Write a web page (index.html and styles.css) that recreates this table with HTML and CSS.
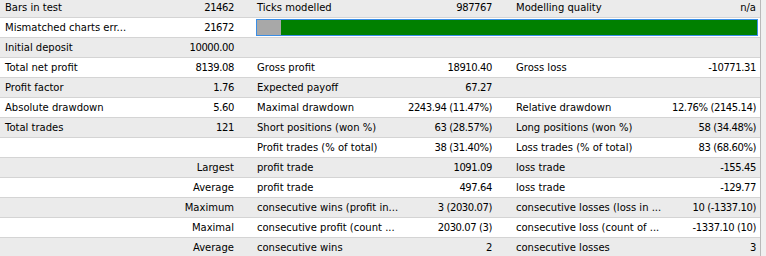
FILE: index.html
```html
<!DOCTYPE html>
<html>
<head>
<meta charset="utf-8">
<link rel="stylesheet" href="styles.css">
</head>
<body>
<div class="report">
  <div class="row odd">
    <div class="lbl first">Bars in test</div><div class="val num">21462</div>
    <div class="lbl mid">Ticks modelled</div><div class="val num">987767</div>
    <div class="lbl last">Modelling quality</div><div class="val end">n/a</div>
  </div>
  <div class="row">
    <div class="lbl first">Mismatched charts err...</div><div class="val num">21672</div>
    <div class="barcell"><div class="bar"><div class="bar-gray"></div><div class="bar-green"></div></div></div>
  </div>
  <div class="row odd">
    <div class="lbl first">Initial deposit</div><div class="val num">10000.00</div>
    <div class="lbl mid"></div><div class="val"></div>
    <div class="lbl last"></div><div class="val end"></div>
  </div>
  <div class="row">
    <div class="lbl first">Total net profit</div><div class="val num">8139.08</div>
    <div class="lbl mid">Gross profit</div><div class="val num">18910.40</div>
    <div class="lbl last">Gross loss</div><div class="val end num">-10771.31</div>
  </div>
  <div class="row odd">
    <div class="lbl first">Profit factor</div><div class="val num">1.76</div>
    <div class="lbl mid">Expected payoff</div><div class="val num">67.27</div>
    <div class="lbl last"></div><div class="val end"></div>
  </div>
  <div class="row">
    <div class="lbl first">Absolute drawdown</div><div class="val num">5.60</div>
    <div class="lbl mid">Maximal drawdown</div><div class="val num">2243.94 (11.47%)</div>
    <div class="lbl last">Relative drawdown</div><div class="val end num">12.76% (2145.14)</div>
  </div>
  <div class="row odd">
    <div class="lbl first">Total trades</div><div class="val num">121</div>
    <div class="lbl mid">Short positions (won %)</div><div class="val num">63 (28.57%)</div>
    <div class="lbl last">Long positions (won %)</div><div class="val end num">58 (34.48%)</div>
  </div>
  <div class="row">
    <div class="lbl first"></div><div class="val"></div>
    <div class="lbl mid">Profit trades (% of total)</div><div class="val num">38 (31.40%)</div>
    <div class="lbl last">Loss trades (% of total)</div><div class="val end num">83 (68.60%)</div>
  </div>
  <div class="row odd">
    <div class="lbl first"></div><div class="val">Largest</div>
    <div class="lbl mid">profit trade</div><div class="val num">1091.09</div>
    <div class="lbl last">loss trade</div><div class="val end num">-155.45</div>
  </div>
  <div class="row">
    <div class="lbl first"></div><div class="val">Average</div>
    <div class="lbl mid">profit trade</div><div class="val num">497.64</div>
    <div class="lbl last">loss trade</div><div class="val end num">-129.77</div>
  </div>
  <div class="row odd">
    <div class="lbl first"></div><div class="val">Maximum</div>
    <div class="lbl mid">consecutive wins (profit in...</div><div class="val num">3 (2030.07)</div>
    <div class="lbl last">consecutive losses (loss in ...</div><div class="val end num">10 (-1337.10)</div>
  </div>
  <div class="row">
    <div class="lbl first"></div><div class="val">Maximal</div>
    <div class="lbl mid">consecutive profit (count ...</div><div class="val num">2030.07 (3)</div>
    <div class="lbl last">consecutive loss (count of ...</div><div class="val end num">-1337.10 (10)</div>
  </div>
  <div class="row odd">
    <div class="lbl first"></div><div class="val">Average</div>
    <div class="lbl mid">consecutive wins</div><div class="val num">2</div>
    <div class="lbl last">consecutive losses</div><div class="val end num">3</div>
  </div>
</div>
</body>
</html>
```

FILE: styles.css
```css
html, body {
  margin: 0;
  padding: 0;
}
body {
  background: #f0f0f0;
  font-family: "DejaVu Sans", Verdana, sans-serif;
  font-size: 10px;
  color: #000;
  overflow: hidden;
}
.report {
  width: 760px;
  margin-top: -2px;
  border-right: 1px solid #b9b9b9;
}
.row {
  display: grid;
  grid-template-columns: 150px 89px 165px 93px 168px 95px;
  height: 19px;
  line-height: 19px;
  border-bottom: 1px solid #d4d4d4;
  background: #ffffff;
}
.row.odd {
  background: #ebebeb;
}
.lbl, .val {
  white-space: nowrap;
  overflow: visible;
}
.lbl.first { padding-left: 5px; }
.lbl.mid { padding-left: 18px; }
.lbl.last { padding-left: 19px; }
.val {
  text-align: right;
  padding-right: 5px;
}
.val.end { padding-right: 4px; }
.num { letter-spacing: -0.4px; }
.barcell {
  grid-column: 3 / 7;
  padding: 1px 2px 1px 17px;
}
.bar {
  height: 15px;
  border: 1px solid #3a8ee6;
  display: flex;
}
.bar-gray {
  width: 24px;
  background: #a8a8a8;
}
.bar-green {
  flex: 1;
  background: #008000;
}
```
